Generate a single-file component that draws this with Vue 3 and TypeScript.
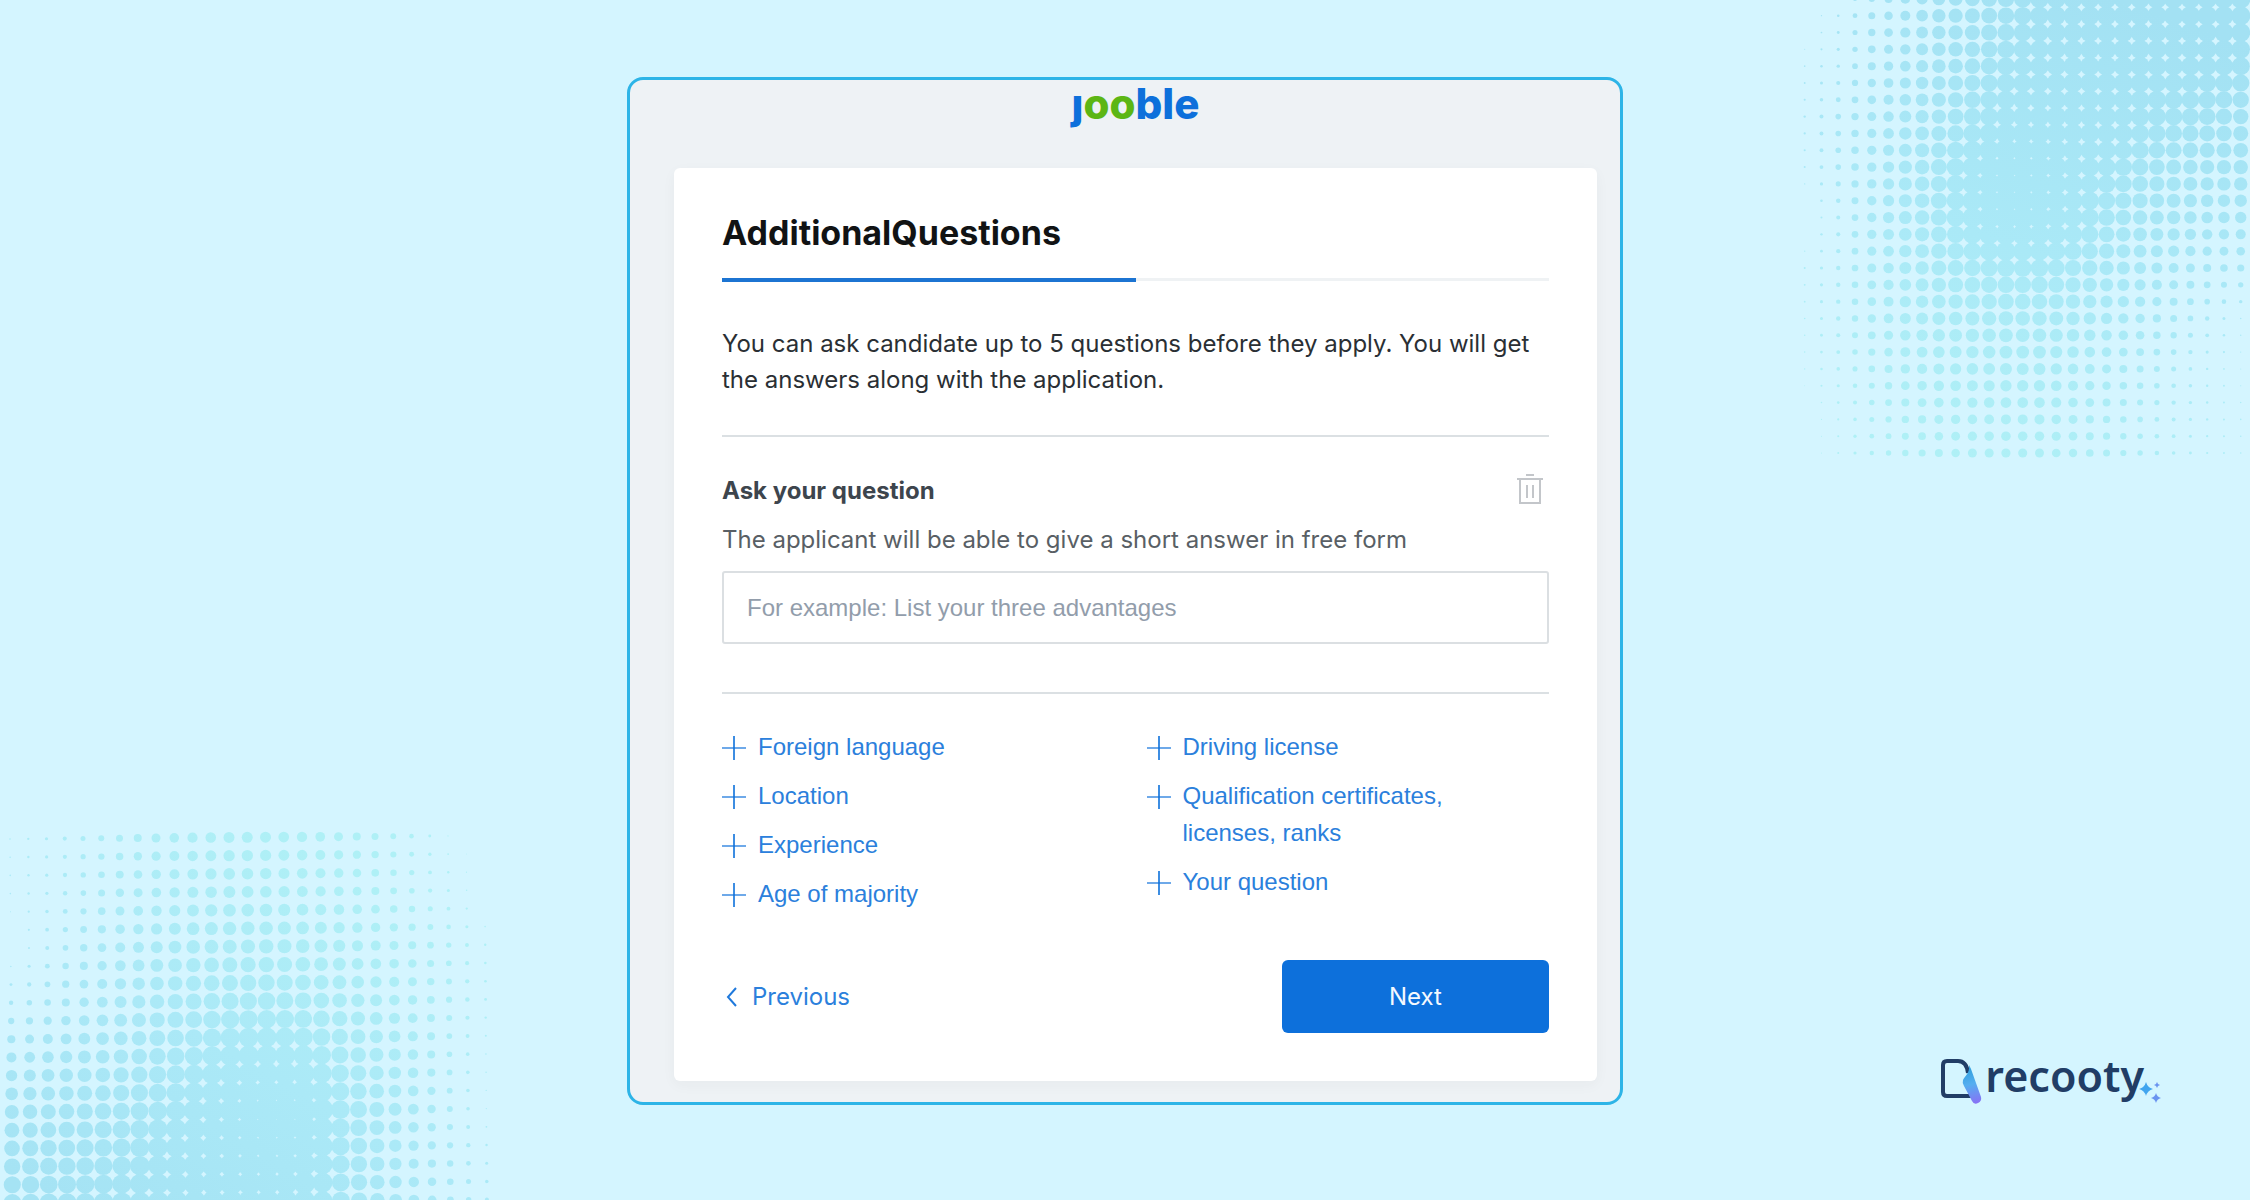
<script setup lang="ts">
import { ref } from 'vue'

interface Dot {
  x: number
  y: number
  r: number
}

interface Halftone {
  rows: number[]
  radii: number[][]
  place: (col: number, row: number) => [number, number]
}

const COLUMN_STEP = 2
const LAST_COLUMN = 26

// Blends the sampled radii so that the dots swell and shrink smoothly.
function buildDots({ rows, radii, place }: Halftone): Dot[] {
  const dots: Dot[] = []
  for (let k = 0; k < rows.length - 1; k++) {
    const isLast = k === rows.length - 2
    const end = isLast ? rows[k + 1] : rows[k + 1] - 1
    for (let row = rows[k]; row <= end; row++) {
      const v = (row - rows[k]) / (rows[k + 1] - rows[k])
      for (let col = 0; col <= LAST_COLUMN; col++) {
        const c = Math.min(Math.floor(col / COLUMN_STEP), LAST_COLUMN / COLUMN_STEP - 1)
        const u = col / COLUMN_STEP - c
        const top = radii[k][c] * (1 - u) + radii[k][c + 1] * u
        const bottom = radii[k + 1][c] * (1 - u) + radii[k + 1][c + 1] * u
        const r = top * (1 - v) + bottom * v
        if (r > 0.4) {
          const [x, y] = place(col, row)
          dots.push({ x, y, r })
        }
      }
    }
  }
  return dots
}

const topDots = buildDots({
  rows: [-1, 0, 3, 6, 9, 12, 15, 18, 21, 24, 26],
  radii: [
    [0, 1, 3.2, 4.8, 6.4, 7.4, 8.2, 9.2, 9.5, 9.7, 9.7, 9.8, 9.8, 9.7],
    [0, 1.3, 3.5, 5, 6.7, 7.5, 8.3, 9.3, 9.6, 9.7, 9.7, 9.8, 9.8, 9.6],
    [0.8, 1.7, 4, 5.3, 6.8, 7.8, 8.9, 9.3, 9.6, 9.7, 9.6, 9.4, 9.3, 9.1],
    [1.2, 2.8, 4.5, 6, 7.2, 8.5, 9.6, 10, 9.9, 9.7, 9.2, 8.8, 8.4, 7.7],
    [1, 2.8, 4.7, 6.6, 8, 9.9, 11.6, 11, 9.8, 9.1, 8.3, 7.5, 7.1, 7.2],
    [0, 2, 4.7, 6.5, 8, 10, 11.5, 10.8, 9.6, 8.3, 7.2, 6.7, 5.8, 5.7],
    [1, 2.2, 4.5, 6, 7.5, 8.3, 8.8, 8.8, 8.1, 7.2, 6, 5, 4, 3.6],
    [0.8, 2.2, 4.2, 5.5, 6.5, 7, 7.3, 7.2, 6.7, 5.6, 4.7, 3.5, 2.2, 0.8],
    [0.7, 1.8, 3.3, 4.7, 5.5, 5.8, 6, 6, 5.3, 4.5, 3.5, 2.5, 1.2, 0.5],
    [0, 1.1, 2.5, 3.7, 4.5, 4.8, 5, 5, 4.5, 3.7, 2.8, 2, 1.2, 0.8],
    [0, 1, 2.2, 3.2, 4, 4.5, 4.6, 4.5, 4.2, 3.5, 2.7, 1.8, 1.1, 0.8],
  ],
  place: (col, row) => [14.7 + col * 16.77, 15.7 + row * 16.82],
})

const bottomDots = buildDots({
  rows: [0, 3, 6, 9, 12, 15, 18, 20],
  radii: [
    [0.8, 1.6, 2.5, 3.5, 4.5, 5.1, 5.5, 5.5, 5.2, 4.5, 3.5, 2.3, 0.6, 0],
    [0.8, 1.6, 2.8, 4.2, 4.8, 5.5, 6, 5.8, 5.4, 4.8, 4, 2.8, 1.5, 0],
    [0, 2, 3.7, 5, 6, 6.8, 7, 7.2, 6.8, 6.1, 5, 4, 2.7, 1.2],
    [2.2, 3.3, 4.7, 6, 7.2, 8, 8.5, 8.7, 8.3, 7.3, 6, 4.7, 3.1, 1.4],
    [5, 5.8, 6.5, 7.2, 8.3, 9.1, 10.3, 10.4, 10, 8.5, 7, 5.2, 2.8, 0.8],
    [7, 7.5, 8, 8.5, 9.3, 10.5, 11.5, 12.9, 12.6, 9.4, 7.5, 5.4, 3, 0.6],
    [8.2, 8.5, 8.8, 9.4, 10.2, 10.9, 11.5, 12, 11.4, 9, 7.3, 5, 3.2, 1.5],
    [8.9, 9.2, 9.5, 9.8, 10.5, 11, 11.4, 11.4, 10.6, 8.9, 7.3, 5.4, 3.4, 2],
  ],
  place: (col, row) => [10 + col * 18.25 + row * 0.12, 29 + row * 18.2 - col * 0.13],
})

const questionColumns: string[][] = [
  ['Foreign language', 'Location', 'Experience', 'Age of majority'],
  ['Driving license', 'Qualification certificates, licenses, ranks', 'Your question'],
]

const question = ref('')
</script>

<template>
  <div class="stage">
    <svg class="halftone halftone-top" viewBox="0 0 460 480" aria-hidden="true">
      <defs>
        <linearGradient id="tone-top" gradientUnits="userSpaceOnUse" x1="330" y1="0" x2="170" y2="460">
          <stop offset="0" stop-color="#a3e1f3" />
          <stop offset="0.55" stop-color="#aae9f7" />
          <stop offset="1" stop-color="#aff0f6" />
        </linearGradient>
      </defs>
      <circle v-for="(d, n) in topDots" :key="n" :cx="d.x" :cy="d.y" :r="d.r" fill="url(#tone-top)" />
    </svg>
    <svg class="halftone halftone-bottom" viewBox="0 0 500 390" aria-hidden="true">
      <defs>
        <linearGradient id="tone-bottom" gradientUnits="userSpaceOnUse" x1="60" y1="390" x2="280" y2="20">
          <stop offset="0" stop-color="#a5e3f4" />
          <stop offset="0.5" stop-color="#abe9f7" />
          <stop offset="1" stop-color="#aff0f6" />
        </linearGradient>
      </defs>
      <circle v-for="(d, n) in bottomDots" :key="n" :cx="d.x" :cy="d.y" :r="d.r" fill="url(#tone-bottom)" />
    </svg>

    <main class="frame">
      <header class="jooble">
        <span class="blue">ȷ</span><span class="green">oo</span><span class="blue">ble</span>
      </header>

      <form class="card" @submit.prevent>
        <h1 class="title">AdditionalQuestions</h1>
        <div class="progress"><div class="progress-done"></div></div>

        <p class="intro">
          You can ask candidate up to 5 questions before they apply. You will get the answers along with the
          application.
        </p>

        <hr class="rule" />

        <div class="question-head">
          <label class="question-label" for="question">Ask your question</label>
          <button class="trash" type="button" aria-label="Delete question">
            <svg width="26" height="32" viewBox="0 0 26 32" fill="none" stroke="#c3c6ca" stroke-width="2">
              <path d="M9 2h8M0 6h26M3 6v24h20V6M10 12v13M16 12v13" />
            </svg>
          </button>
        </div>
        <p id="question-hint" class="hint">The applicant will be able to give a short answer in free form</p>
        <input
          id="question"
          v-model="question"
          class="field"
          type="text"
          aria-describedby="question-hint"
          placeholder="For example: List your three advantages"
        />

        <hr class="rule rule-low" />

        <div class="options">
          <ul v-for="(column, c) in questionColumns" :key="c" class="option-list">
            <li v-for="label in column" :key="label">
              <button class="option" type="button">
                <svg class="plus" width="24" height="37" viewBox="0 0 24 37" fill="none" stroke="#0d70db">
                  <path d="M12 8v24" stroke-width="2" stroke-opacity="0.8" />
                  <path d="M0 20h24" stroke-width="2" stroke-opacity="0.6" />
                </svg>
                <span>{{ label }}</span>
              </button>
            </li>
          </ul>
        </div>

        <div class="actions">
          <button class="previous" type="button">
            <svg width="11" height="20" viewBox="0 0 11 20" fill="none" stroke="#1f79dc" stroke-width="2">
              <path d="M10 1L2 10l8 9" />
            </svg>
            Previous
          </button>
          <button class="next" type="submit">Next</button>
        </div>
      </form>
    </main>

    <div class="recooty">
      <svg class="mark" width="42" height="48" viewBox="0 0 42 48" fill="none" aria-hidden="true">
        <defs>
          <linearGradient id="fold" gradientUnits="userSpaceOnUse" x1="26" y1="8" x2="36" y2="46">
            <stop offset="0" stop-color="#2f9fdc" />
            <stop offset="0.45" stop-color="#55aef0" />
            <stop offset="1" stop-color="#8c6cf6" />
          </linearGradient>
        </defs>
        <path d="M30 37H6Q2 37 2 33V6Q2 2 6 2H17C23 2 26 6 27 14" stroke="#213d66" stroke-width="4" />
        <path d="M28 6C29 14 24 17 22 21Q21 24 23 27L31 42Q33 46 37 44Q41 42 40 38L30 10Z" fill="url(#fold)" />
      </svg>
      <span class="recooty-name">recooty</span>
      <svg class="sparkles" width="24" height="26" viewBox="0 0 24 26" aria-hidden="true">
        <path d="M8 1Q9.500 6.500 15 8Q9.500 9.500 8 15Q6.500 9.500 1 8Q6.500 6.500 8 1Z" fill="#41a5ef" />
        <path d="M18 12Q19 16 23 17Q19 18 18 22Q17 18 13 17Q17 16 18 12Z" fill="#6a93f0" />
        <path d="M19 1Q19.500 3.500 22 4Q19.500 4.500 19 7Q18.500 4.500 16 4Q18.500 3.500 19 1Z" fill="#6a93f0" />
      </svg>
    </div>
  </div>
</template>

<style>
body {
  margin: 0;
  background: #d4f5ff;
}
</style>

<style scoped>
.stage {
  position: relative;
  box-sizing: border-box;
  min-height: 100vh;
  display: grid;
  grid-template-columns: 1fr minmax(0, 996px) 1fr;
  align-items: start;
  padding: 77px 88px 93px;
  overflow: hidden;
  background: #d4f5ff;
  font-family: Inter, 'Liberation Sans', sans-serif;
  font-size: 24px;
  line-height: 36px;
}

.halftone {
  position: absolute;
}

.halftone-top {
  top: 0;
  right: 0;
  width: 460px;
}

.halftone-bottom {
  bottom: 0;
  left: 0;
  width: 500px;
}

.frame {
  grid-column: 2;
  position: relative;
  box-sizing: border-box;
  padding: 0 23px 21px 44px;
  border: 3px solid #2db4e7;
  border-radius: 16px;
  background: #eef2f5;
}

.jooble {
  height: 88px;
  font-size: 42px;
  font-weight: 800;
  line-height: 48px;
  text-align: center;
}

.blue {
  color: #0d70db;
}

.green {
  color: #5cb614;
}

.card {
  padding: 48px;
  border-radius: 6px;
  background: #fff;
  box-shadow: 0 4px 14px rgba(40, 50, 60, 0.04);
}

.title {
  margin: 0 0 28px;
  color: #111314;
  font-size: 34px;
  font-weight: 650;
  line-height: 34px;
}

.progress {
  height: 4px;
  background: linear-gradient(#eff2f4 3px, transparent 3px);
}

.progress-done {
  width: 50%;
  height: 4px;
  background: #1c74d2;
}

.intro {
  margin: 44px 0 37px;
  color: #2a2f34;
}

.rule {
  height: 2px;
  margin: 0;
  border: 0;
  background: #dbe0e3;
}

.question-head {
  display: flex;
  align-items: flex-start;
  justify-content: space-between;
  margin-top: 36px;
}

.question-label {
  color: #3d454d;
  font-weight: 700;
}

.trash {
  display: block;
  height: 32px;
  margin-right: 6px;
  padding: 0;
  border: 0;
  background: none;
}

.trash svg {
  display: block;
}

.hint {
  margin: 13px 0;
  color: #595f65;
}

.field {
  display: block;
  box-sizing: border-box;
  width: 100%;
  height: 73px;
  padding: 0 23px;
  border: 2px solid #dbdfe2;
  border-radius: 3px;
  background: #fff;
  color: #2a2f34;
  font-family: 'Liberation Sans', Arial, sans-serif;
  font-size: 24px;
}

.field::placeholder {
  color: #929dab;
  opacity: 1;
}

.rule-low {
  margin: 48px 0 34px;
}

.options {
  display: grid;
  grid-template-columns: 1fr 1fr;
  gap: 22px;
  font-family: 'Liberation Sans', Arial, sans-serif;
  line-height: 37px;
}

.option-list {
  display: flex;
  flex-direction: column;
  gap: 12px;
  margin: 0;
  padding: 0 24px 0 0;
  list-style: none;
}

.option {
  display: flex;
  align-items: flex-start;
  gap: 12px;
  padding: 0;
  border: 0;
  background: none;
  color: #2b80dc;
  font: inherit;
  text-align: left;
}

.plus {
  flex: none;
}

.actions {
  display: flex;
  align-items: center;
  justify-content: space-between;
  margin-top: 48px;
}

.previous {
  display: flex;
  align-items: center;
  gap: 15px;
  padding: 0 0 0 4px;
  border: 0;
  background: none;
  color: #2b80dc;
  font: inherit;
}

.next {
  width: 267px;
  height: 73px;
  border: 0;
  border-radius: 6px;
  background: #0d70db;
  color: #f4f9ff;
  font: inherit;
}

.recooty {
  grid-column: 3;
  position: relative;
  display: flex;
  align-items: flex-start;
  align-self: end;
  justify-self: end;
}

.recooty-name {
  margin-left: 2px;
  color: #213d66;
  font-family: 'Noto Sans', 'Open Sans', sans-serif;
  font-size: 43px;
  font-weight: 600;
  line-height: 34px;
}

.sparkles {
  align-self: flex-end;
  margin-left: -6px;
}
</style>
